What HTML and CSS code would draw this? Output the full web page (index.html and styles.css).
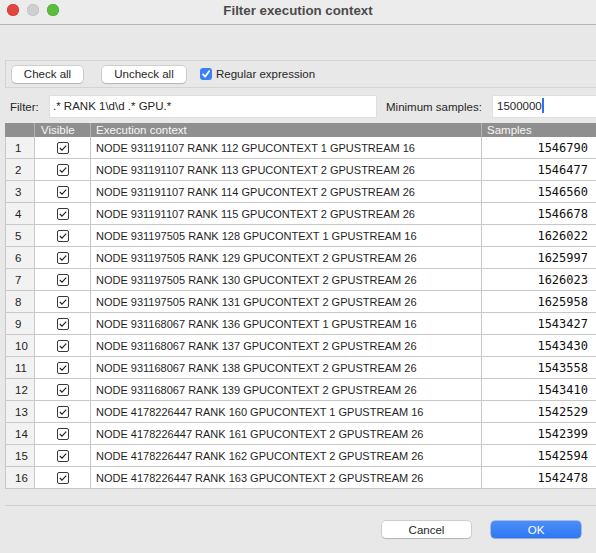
FILE: index.html
```html
<!DOCTYPE html>
<html>
<head>
<meta charset="utf-8">
<title>Filter execution context</title>
<link rel="stylesheet" href="styles.css">
</head>
<body>
<div class="window">
  <div class="titlebar">
    <div class="lights">
      <span class="light red"></span>
      <span class="light grey"></span>
      <span class="light green"></span>
    </div>
    <div class="title">Filter execution context</div>
    <div></div>
  </div>

  <div class="main">
    <div class="toolbar">
      <button class="btn w-check">Check all</button>
      <button class="btn w-uncheck">Uncheck all</button>
      <label class="regex">
        <span class="bluebox"><svg width="12" height="12" viewBox="0 0 12 12"><path d="M3 6.3 L5.1 8.6 L9.2 3.3" fill="none" stroke="#fff" stroke-width="1.8" stroke-linecap="round" stroke-linejoin="round"/></svg></span>
        <span>Regular expression</span>
      </label>
    </div>

    <div class="filter-row">
      <span class="lbl-filter">Filter:</span>
      <div class="input in-filter">.* RANK 1\d\d .* GPU.*</div>
      <span class="lbl-min">Minimum samples:</span>
      <div class="input in-min">1500000<span class="caret"></span></div>
    </div>

    <div class="table-frame">
      <div class="row head">
        <div class="c num"></div>
        <div class="c vis">Visible</div>
        <div class="c ctx">Execution context</div>
        <div class="c smp">Samples</div>
      </div>
      <div id="rows"></div>
    </div>
  </div>

  <div class="footer">
    <button class="btn cancel">Cancel</button>
    <button class="btn ok">OK</button>
  </div>
</div>
<script src="script.js"></script>
</body>
</html>
```

FILE: script.js
```js
var data = [
  ["NODE 931191107 RANK 112 GPUCONTEXT 1 GPUSTREAM 16", "1546790"],
  ["NODE 931191107 RANK 113 GPUCONTEXT 2 GPUSTREAM 26", "1546477"],
  ["NODE 931191107 RANK 114 GPUCONTEXT 2 GPUSTREAM 26", "1546560"],
  ["NODE 931191107 RANK 115 GPUCONTEXT 2 GPUSTREAM 26", "1546678"],
  ["NODE 931197505 RANK 128 GPUCONTEXT 1 GPUSTREAM 16", "1626022"],
  ["NODE 931197505 RANK 129 GPUCONTEXT 2 GPUSTREAM 26", "1625997"],
  ["NODE 931197505 RANK 130 GPUCONTEXT 2 GPUSTREAM 26", "1626023"],
  ["NODE 931197505 RANK 131 GPUCONTEXT 2 GPUSTREAM 26", "1625958"],
  ["NODE 931168067 RANK 136 GPUCONTEXT 1 GPUSTREAM 16", "1543427"],
  ["NODE 931168067 RANK 137 GPUCONTEXT 2 GPUSTREAM 26", "1543430"],
  ["NODE 931168067 RANK 138 GPUCONTEXT 2 GPUSTREAM 26", "1543558"],
  ["NODE 931168067 RANK 139 GPUCONTEXT 2 GPUSTREAM 26", "1543410"],
  ["NODE 4178226447 RANK 160 GPUCONTEXT 1 GPUSTREAM 16", "1542529"],
  ["NODE 4178226447 RANK 161 GPUCONTEXT 2 GPUSTREAM 26", "1542399"],
  ["NODE 4178226447 RANK 162 GPUCONTEXT 2 GPUSTREAM 26", "1542594"],
  ["NODE 4178226447 RANK 163 GPUCONTEXT 2 GPUSTREAM 26", "1542478"]
];
var box = '<svg width="12" height="12" viewBox="0 0 12 12"><rect x="0.5" y="0.5" width="11" height="11" rx="1.5" fill="#fff" stroke="#3a3a3a" stroke-width="1"/><path d="M2.8 6 L5 8.2 L9.2 3.6" fill="none" stroke="#1e1e1e" stroke-width="1.1"/></svg>';
var html = "";
for (var i = 0; i < data.length; i++) {
  html += '<div class="row body">' +
    '<div class="c num">' + (i + 1) + '</div>' +
    '<div class="c vis">' + box + '</div>' +
    '<div class="c ctx">' + data[i][0] + '</div>' +
    '<div class="c smp">' + data[i][1] + '</div>' +
    '</div>';
}
document.getElementById("rows").innerHTML = html;
```

FILE: styles.css
```css
* { box-sizing: border-box; }
html, body { margin: 0; padding: 0; }
body {
  width: 596px;
  height: 553px;
  overflow: hidden;
  background: #e8e8e8;
  font-family: "Liberation Sans", Arial, sans-serif;
  font-size: 11.5px;
  color: #262626;
}
.window { width: 596px; height: 553px; display: flex; flex-direction: column; }

.titlebar {
  height: 25px;
  flex: none;
  background: #ececec;
  border-bottom: 1px solid #b6b6b6;
  display: grid;
  grid-template-columns: 1fr auto 1fr;
  align-items: center;
}
.lights { display: flex; gap: 8px; padding-left: 7px; padding-bottom: 4px; }
.light { width: 12px; height: 12px; border-radius: 50%; display: block; }
.red { background: #e2463f; box-shadow: inset 0 0 0 0.5px #c9352f; }
.grey { background: #cfcfcf; box-shadow: inset 0 0 0 0.5px #b9b9b9; }
.green { background: #5bbd3d; box-shadow: inset 0 0 0 0.5px #48a32c; }
.title {
  font-weight: bold;
  font-size: 13.3px;
  color: #4b4b4b;
  padding-bottom: 4px;
}

.main { padding-left: 5px; flex: none; }

.toolbar {
  margin-top: 35px;
  height: 28px;
  border: 1px solid #d4d4d4;
  border-right: none;
  display: flex;
  align-items: center;
  padding-left: 6px;
}
.btn {
  font-family: inherit;
  font-size: 11.5px;
  color: #262626;
  background: #fff;
  border: none;
  border-radius: 4px;
  height: 17px;
  padding: 0;
  box-shadow: 0 0 0 0.5px rgba(0,0,0,0.22), 0 1px 1px rgba(0,0,0,0.12);
}
.w-check { width: 71px; }
.w-uncheck { width: 84px; margin-left: 19px; }
.regex { display: flex; align-items: center; margin-left: 14px; gap: 4px; font-size: 11.5px; }
.bluebox {
  width: 12px; height: 12px;
  border-radius: 3px;
  background: #3a7ff6;
  display: block;
}
.bluebox svg { display: block; }

.filter-row {
  margin-top: 8px;
  height: 21px;
  display: flex;
  align-items: center;
}
.lbl-filter { width: 45px; padding-left: 5px; }
.input {
  height: 21px;
  background: #fff;
  box-shadow: 0 0 0 0.5px #d6d6d6;
  padding-left: 3px;
  line-height: 20px;
  white-space: nowrap;
}
.in-filter { width: 326px; }
.lbl-min { margin-left: 10px; width: 107px; }
.in-min { flex: 1; padding-left: 4px; }
.caret {
  display: inline-block;
  width: 2px;
  height: 15px;
  background: #2f6ff0;
  vertical-align: -3px;
}

.table-frame {
  margin-top: 6px;
  height: 383px;
  border-bottom: 1px solid #cfcfcf;
}
.row {
  display: grid;
  grid-template-columns: 30px 56px 391px 114px;
}
.c {
  border-right: 1px solid #c8c8c8;
  border-bottom: 1px solid #c8c8c8;
  white-space: nowrap;
  overflow: hidden;
  display: flex;
  align-items: center;
}
.c.smp { border-right: none; }
.head .c {
  height: 14px;
  background: #8f8f8f;
  color: #f7f7f7;
  font-size: 11.5px;
  border-right-color: #b4b4b4;
  border-bottom: none;
  padding-left: 5px;
}
.head .c.vis { padding-left: 6px; }
.body .c { height: 22px; background: #fff; color: #1f1f1f; }
.body .c.num { background: #f2f2f2; padding-left: 9px; font-size: 11.5px; }
.body .c.vis { justify-content: center; padding-left: 1px; }
.body .c.vis svg { display: block; }
.body .c.ctx { padding-left: 5px; font-size: 11px; }
.body .c.smp {
  justify-content: flex-end;
  padding-right: 8px;
  font-family: "DejaVu Sans Mono", monospace;
  font-size: 12px;
  color: #111;
}
.c.num { border-left: 1px solid #c8c8c8; }
.head .c.num { border-left-color: #8f8f8f; }

.footer {
  flex: none;
  display: flex;
  justify-content: flex-end;
  gap: 20px;
  padding: 15px 15px 0 0;
}
.cancel { width: 89px; }
.ok {
  width: 90px;
  color: #fff;
  background: linear-gradient(#4a90f8, #2f77f1);
  box-shadow: 0 0 0 0.5px rgba(30,90,220,0.6), 0 1px 1px rgba(0,0,0,0.12);
}
```
